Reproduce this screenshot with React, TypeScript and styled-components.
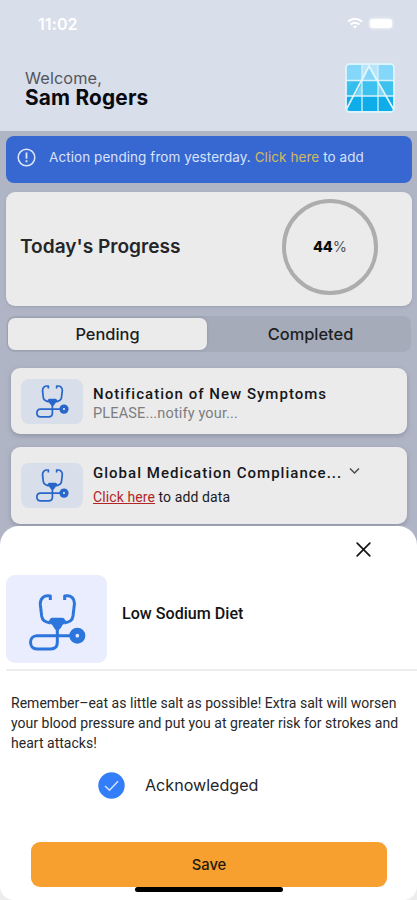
import React from 'react';
import styled, { createGlobalStyle } from 'styled-components';

const GlobalStyle = createGlobalStyle`
  * { box-sizing: border-box; }
  body { margin: 0; background: #b0b5c4; }
  button { border: 0; padding: 0; background: none; font: inherit; color: inherit; }
`;

const Screen = styled.div`
  width: 417px;
  height: 900px;
  overflow: hidden;
  display: flex;
  flex-direction: column;
  background: #b0b5c5;
  font-family: Inter, sans-serif;
  color: #16171b;
`;

const Header = styled.header`
  height: 131px;
  flex: none;
  background: #d8deea;
`;

const StatusBar = styled.div`
  height: 47px;
  padding: 0 25px 0 38px;
  display: flex;
  align-items: center;
  justify-content: space-between;
  color: #fff;
`;

const Clock = styled.span`
  font-size: 16px;
  font-weight: 600;
  letter-spacing: 0.1px;
`;

const StatusIcons = styled.div`
  display: flex;
  align-items: center;
  gap: 7px;
`;

const Battery = styled.span`
  width: 22px;
  height: 9px;
  border-radius: 3px;
  background: #fff;
  box-shadow: 0 0 3px 1px #ffffff90;
`;

const Greeting = styled.div`
  display: flex;
  justify-content: space-between;
  padding: 16px 22px 0 25px;
`;

const Welcome = styled.div`
  padding-top: 5px;
  font-size: 16.3px;
  line-height: 20px;
  letter-spacing: 0.1px;
  color: #53565d;
`;

const UserName = styled.div`
  font-size: 20.8px;
  line-height: 20px;
  font-weight: 650;
  letter-spacing: 0.2px;
  color: #080a10;
`;

const Banner = styled.div`
  height: 47px;
  flex: none;
  margin: 5px 5px 0 6px;
  padding: 0 0 5px 11px;
  border-radius: 8px;
  background: #3768d1;
  color: #d9e2fa;
  display: flex;
  align-items: center;
  gap: 13px;
  font-size: 13.5px;
  letter-spacing: 0.07px;
  white-space: nowrap;
`;

const BannerLink = styled.span`
  color: #d2ba62;
`;

const ProgressCard = styled.section`
  height: 114px;
  flex: none;
  margin: 9px 5px 0 6px;
  padding: 0 34px 0 14px;
  border-radius: 9px;
  background: #ebebeb;
  box-shadow: 0 1px 3px #6e748755;
  display: flex;
  align-items: center;
  justify-content: space-between;
`;

const ProgressTitle = styled.h2`
  margin: 0;
  padding-bottom: 7px;
  font-size: 19.1px;
  line-height: 24px;
  font-weight: 600;
  color: #25262a;
`;

const Ring = styled.div`
  width: 96px;
  height: 96px;
  margin-bottom: 5px;
  border: 4px solid #adadad;
  border-radius: 50%;
  display: flex;
  align-items: center;
  justify-content: center;
  font-size: 14.5px;
  color: #55565a;
`;

const RingValue = styled.b`
  font-weight: 800;
  color: #0c0c0e;
`;

const Tabs = styled.div`
  height: 36px;
  flex: none;
  margin: 10px 6px 0 7px;
  padding: 2px 1px;
  border-radius: 8px;
  background: #a6abba;
  display: grid;
  grid-template-columns: 199px 1fr;
`;

const Tab = styled.button<{ $active?: boolean }>`
  border-radius: 7px;
  background: ${(p) => (p.$active ? '#ebebeb' : 'transparent')};
  box-shadow: ${(p) => (p.$active ? '0 0 3px #666b7d66' : 'none')};
  font-size: 16.4px;
  font-weight: 500;
  color: #1d1e23;
  padding: ${(p) => (p.$active ? '0 0 1px' : '0 0 1px 4px')};
`;

const TaskCard = styled.article<{ $height: number; $gap: number }>`
  height: ${(p) => p.$height}px;
  flex: none;
  margin: ${(p) => p.$gap}px 10px 0 11px;
  padding-left: 10px;
  border-radius: 9px;
  background: #ebebeb;
  box-shadow: 0 2px 5px #70768a88;
  display: flex;
  align-items: center;
  gap: 10px;
  font-family: Roboto, sans-serif;
`;

const TaskIcon = styled.div`
  width: 62px;
  height: 45px;
  border-radius: 8px;
  background: #d8deea;
  display: flex;
  align-items: center;
  justify-content: center;
`;

const TaskText = styled.div<{ $tall?: boolean }>`
  padding: ${(p) => (p.$tall ? '0 0 1px' : '4px 0 0')};
`;

const TaskTitle = styled.div`
  display: flex;
  align-items: center;
  gap: 7px;
  font-size: 15px;
  line-height: 20px;
  font-weight: 500;
  letter-spacing: 1.02px;
  white-space: nowrap;
`;

const TaskNote = styled.div<{ $dark?: boolean }>`
  font-size: ${(p) => (p.$dark ? '14px' : '14.5px')};
  line-height: 19px;
  letter-spacing: ${(p) => (p.$dark ? '0.1px' : '0.15px')};
  padding-top: ${(p) => (p.$dark ? '5px' : '0')};
  color: ${(p) => (p.$dark ? '#1b1b1d' : '#7c7d80')};
`;

const RedLink = styled.span`
  color: #b42626;
  text-decoration: underline;
`;

const SheetBackdrop = styled.div`
  flex: none;
  margin-top: 2px;
  background: linear-gradient(#b0b5c5 50%, #ededed 50%);
`;

const Sheet = styled.section`
  height: 374px;
  border-radius: 19px 19px 14px 14px;
  background: #fff;
  display: flex;
  flex-direction: column;
  font-family: Roboto, sans-serif;
  color: #131313;
`;

const CloseRow = styled.div`
  height: 49px;
  flex: none;
  padding: 16px 46px 0 0;
  display: flex;
  justify-content: flex-end;
  align-items: flex-start;
`;

const CloseButton = styled.button`
  display: block;
  width: 15px;
  height: 15px;
`;

const TopicRow = styled.div`
  height: 96px;
  flex: none;
  margin-left: 6px;
  border-bottom: 2px solid #ededf0;
  display: flex;
  align-items: flex-start;
  gap: 15px;
`;

const TopicIcon = styled.div`
  width: 101px;
  height: 88px;
  border-radius: 9px;
  background: #e9edfd;
  display: flex;
  align-items: center;
  justify-content: center;
  padding: 6px 0 0 1px;
`;

const TopicTitle = styled.h3`
  margin: 0;
  padding-top: 29px;
  font-size: 16.1px;
  line-height: 20px;
  font-weight: 500;
`;

const Advice = styled.p`
  margin: 22px 0 0 11px;
  font-size: 14px;
  line-height: 20px;
  letter-spacing: 0.02px;
  color: #27272a;
  white-space: nowrap;
`;

const AckRow = styled.label`
  height: 28px;
  margin: 18px 0 0 98px;
  display: flex;
  align-items: center;
  gap: 20px;
  font-family: Inter, sans-serif;
  font-size: 16.1px;
  color: #252529;
`;

const SaveButton = styled.button`
  height: 45px;
  flex: none;
  margin: 43px 30px 0 31px;
  border-radius: 9px;
  background: #f7a02f;
  font-family: Inter, sans-serif;
  font-size: 14.8px;
  font-weight: 500;
  color: #241b0d;
`;

const HomeIndicator = styled.div`
  width: 148px;
  height: 5px;
  flex: none;
  margin: 0 0 0 135px;
  border-radius: 3px;
  background: #000;
`;

function Stethoscope({ size, color }: { size: number; color: string }) {
  return (
    <svg width={size} height={size} viewBox="0 0 171 171" fill="none" stroke={color} strokeWidth="9" strokeLinejoin="round">
      <path d="M64 18V6C44 2 33 14 34 32L38 66C40 80 48 84 64 87" />
      <path d="M107 18V6C127 2 138 14 136 32L132 66C130 80 122 84 106 87" />
      <path d="M62 77Q64 71 70 71H100Q106 71 108 77L113 84Q100 91 96 101Q91 109 85 109Q79 109 75 101Q70 91 57 84Z" fill={color} stroke="none" />
      <path d="M85 105V145Q85 165 65 165H24C-2 165 -2 125 24 125H125" />
      <circle cx="145" cy="125" r="24" fill={color} stroke="none" />
      <circle cx="145" cy="125" r="5.5" fill="#dfe9ff" stroke="none" />
    </svg>
  );
}

function GridLogo() {
  return (
    <svg width="50" height="50" viewBox="0 0 50 50">
      <defs>
        <clipPath id="logo-frame"><rect x="1" y="1" width="48" height="48" rx="3" /></clipPath>
      </defs>
      <g clipPath="url(#logo-frame)">
        <rect width="50" height="18" fill="#84d7f8" />
        <rect y="18" width="50" height="15" fill="#3dc2ef" />
        <rect y="33" width="50" height="17" fill="#0eace8" />
        <path d="M17 0H33V18H31L24 5L18 18H17Z" fill="#b6e5fa" />
        <path d="M17 18H20L12 33H0L8 18Z" fill="#37bdec" />
        <path d="M33 18L40 33H33Z" fill="#7bd5f4" />
        <path d="M17 20V33H10Z" fill="#7bd5f4" />
        <path d="M17 0V50M33 0V50M0 17.5H50M0 33H50" stroke="#d9f1fb" strokeWidth="1.3" />
        <path d="M1 47L24 3L49 47" fill="none" stroke="#e3f5fd" strokeWidth="1.7" />
      </g>
      <rect x="1" y="1" width="48" height="48" rx="3.5" fill="none" stroke="#def4fd" strokeWidth="1.8" />
    </svg>
  );
}

export default function App() {
  return (
    <>
      <GlobalStyle />
      <Screen>
        <Header>
          <StatusBar>
            <Clock>11:02</Clock>
            <StatusIcons>
              <svg width="16" height="13" viewBox="0 0 17 13" fill="none" stroke="#fff" strokeWidth="2.1">
                <path d="M1 4.5Q8.5-1.8 16 4.5M3.8 7.6Q8.5 3.8 13.2 7.6" />
                <path d="M6.2 9.4Q8.5 7.6 10.8 9.4L8.5 12Z" fill="#fff" stroke="none" />
              </svg>
              <Battery />
            </StatusIcons>
          </StatusBar>
          <Greeting>
            <div>
              <Welcome>Welcome,</Welcome>
              <UserName>Sam Rogers</UserName>
            </div>
            <GridLogo />
          </Greeting>
        </Header>

        <Banner>
          <svg width="19" height="19" viewBox="0 0 19 19" fill="none" stroke="#dce5fb" strokeWidth="1.5">
            <circle cx="9.5" cy="9.5" r="8.3" />
            <path d="M9.5 4.5V10.8M9.5 12.3V14.2" strokeWidth="1.8" />
          </svg>
          <span>Action pending from yesterday. <BannerLink>Click here</BannerLink> to add</span>
        </Banner>

        <ProgressCard>
          <ProgressTitle>Today's Progress</ProgressTitle>
          <Ring><RingValue>44</RingValue>%</Ring>
        </ProgressCard>

        <Tabs>
          <Tab $active>Pending</Tab>
          <Tab>Completed</Tab>
        </Tabs>

        <TaskCard $height={66} $gap={16}>
          <TaskIcon><Stethoscope size={33} color="#2867c9" /></TaskIcon>
          <TaskText>
            <TaskTitle>Notification of New Symptoms</TaskTitle>
            <TaskNote>PLEASE...notify your...</TaskNote>
          </TaskText>
        </TaskCard>
        <TaskCard $height={77} $gap={13}>
          <TaskIcon><Stethoscope size={33} color="#2867c9" /></TaskIcon>
          <TaskText $tall>
            <TaskTitle>
              Global Medication Compliance...
              <svg width="11" height="12" viewBox="0 0 11 12" fill="none" stroke="#4b4c50" strokeWidth="1.5">
                <path d="M1 1.5L5.5 6L10 1.5" />
              </svg>
            </TaskTitle>
            <TaskNote $dark><RedLink>Click here</RedLink> to add data</TaskNote>
          </TaskText>
        </TaskCard>

        <SheetBackdrop>
          <Sheet>
            <CloseRow>
              <CloseButton aria-label="Close">
                <svg width="15" height="15" viewBox="0 0 15 15" stroke="#161616" strokeWidth="1.7" strokeLinecap="round">
                  <path d="M1.2 1.2L13.8 13.8M13.8 1.2L1.2 13.8" />
                </svg>
              </CloseButton>
            </CloseRow>
            <TopicRow>
              <TopicIcon><Stethoscope size={57} color="#2c75dc" /></TopicIcon>
              <TopicTitle>Low Sodium Diet</TopicTitle>
            </TopicRow>
            <Advice>
              Remember–eat as little salt as possible! Extra salt will worsen<br />
              your blood pressure and put you at greater risk for strokes and<br />
              heart attacks!
            </Advice>
            <AckRow>
              <svg width="27" height="27" viewBox="0 0 27 27" fill="none">
                <circle cx="13.5" cy="13.5" r="13.2" fill="#337df8" />
                <path d="M7 14L11.5 18.2L20 9.2" stroke="#d5e5ff" strokeWidth="1.5" />
              </svg>
              <span>Acknowledged</span>
            </AckRow>
            <SaveButton>Save</SaveButton>
            <HomeIndicator />
          </Sheet>
        </SheetBackdrop>
      </Screen>
    </>
  );
}
